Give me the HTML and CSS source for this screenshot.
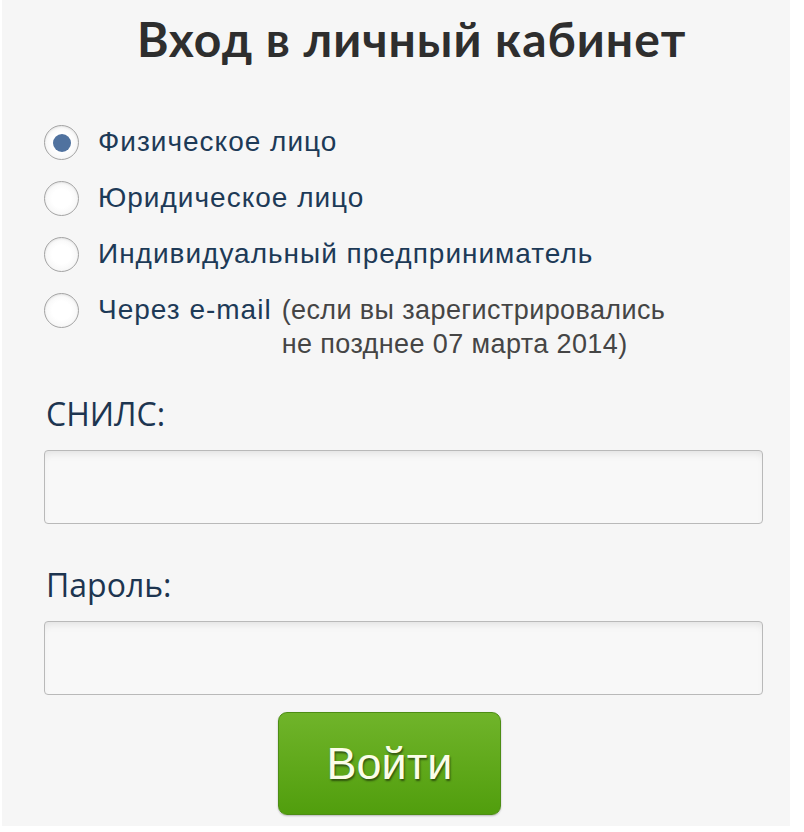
FILE: index.html
```html
<!DOCTYPE html>
<html lang="ru">
<head>
    <meta charset="UTF-8">
    <title>Вход в личный кабинет</title>
    <link rel="stylesheet" href="styles.css">
</head>
<body>
    <div class="login-box">
        <h1>Вход в личный кабинет</h1>

        <form class="login-form">
            <div class="login-types">
                <label class="type-row">
                    <input type="radio" name="login_type" value="person" checked>
                    <span class="radio-mark"></span>
                    <span class="type-name">Физическое лицо</span>
                </label>
                <label class="type-row">
                    <input type="radio" name="login_type" value="company">
                    <span class="radio-mark"></span>
                    <span class="type-name">Юридическое лицо</span>
                </label>
                <label class="type-row">
                    <input type="radio" name="login_type" value="ip">
                    <span class="radio-mark"></span>
                    <span class="type-name">Индивидуальный предприниматель</span>
                </label>
                <label class="type-row">
                    <input type="radio" name="login_type" value="email">
                    <span class="radio-mark"></span>
                    <span class="type-name">Через e-mail</span>
                    <span class="type-note">(если вы зарегистрировались<br>не позднее 07 марта 2014)</span>
                </label>
            </div>

            <label class="field-label" for="snils">СНИЛС:</label>
            <input class="field-input" type="text" id="snils" name="snils">

            <label class="field-label" for="password">Пароль:</label>
            <input class="field-input" type="password" id="password" name="password">

            <button type="submit" class="submit-button">Войти</button>
        </form>
    </div>
</body>
</html>
```

FILE: styles.css
```css
body {
    margin: 0;
    background-color: #ffffff;
    font-family: "Open Sans", Arial, sans-serif;
}

.login-box {
    background-color: #f6f6f6;
    margin: 0 14px 6px 2px;
    padding: 7px 0 10px 42px;
    height: 809px;
}

h1 {
    margin: 0 0 0 93px;
    font-family: Lato, "Open Sans", sans-serif;
    font-size: 48px;
    font-weight: 700;
    letter-spacing: 1px;
    color: #2e2e2e;
    line-height: 64px;
}

.login-form {
    display: flex;
    flex-direction: column;
}

/* Radio list */
.login-types {
    display: flex;
    flex-direction: column;
    gap: 21px;
    margin-top: 54px;
}

.type-row {
    display: flex;
    align-items: flex-start;
    cursor: pointer;
}

.type-row input {
    display: none;
}

.radio-mark {
    width: 35px;
    height: 35px;
    box-sizing: border-box;
    border: 1px solid #a4a4a4;
    border-radius: 50%;
    background: radial-gradient(circle, #ffffff 40%, #efefef 100%);
    display: flex;
    align-items: center;
    justify-content: center;
    flex-shrink: 0;
    margin-right: 19px;
    box-shadow: inset 0 1px 2px rgba(0, 0, 0, 0.08);
}

.type-row input:checked + .radio-mark::after {
    content: "";
    width: 18px;
    height: 18px;
    border-radius: 50%;
    background-color: #50729f;
}

.type-name {
    font-family: Arial, "Liberation Sans", sans-serif;
    font-size: 28px;
    line-height: 34px;
    color: #1d3a57;
    letter-spacing: 1px;
}

.type-note {
    font-family: Arial, "Liberation Sans", sans-serif;
    font-size: 27px;
    line-height: 34px;
    color: #454545;
    margin-left: 10px;
    letter-spacing: 0.4px;
}

/* Fields */
.field-label {
    font-size: 32px;
    color: #1d3550;
    line-height: 40px;
    margin-top: 33px;
    margin-left: 2px;
}

.field-input {
    width: 719px;
    height: 74px;
    box-sizing: border-box;
    margin: 16px 0 8px;
    border: 1px solid #b9b9b9;
    border-radius: 4px;
    background-color: #f8f8f8;
    box-shadow: inset 0 6px 8px -4px rgba(0, 0, 0, 0.10);
}

.submit-button {
    align-self: flex-start;
    margin: 9px 0 0 234px;
    width: 223px;
    height: 103px;
    border: 1px solid #4d8d14;
    border-radius: 9px;
    background: linear-gradient(#70b42a, #519e0d);
    color: #fbfde8;
    font-family: Arial, "Liberation Sans", sans-serif;
    font-size: 45px;
    text-shadow: 1px 2px 2px rgba(0, 0, 0, 0.5);
    cursor: pointer;
    box-shadow: 0 1px 2px rgba(0, 0, 0, 0.25);
}
```
